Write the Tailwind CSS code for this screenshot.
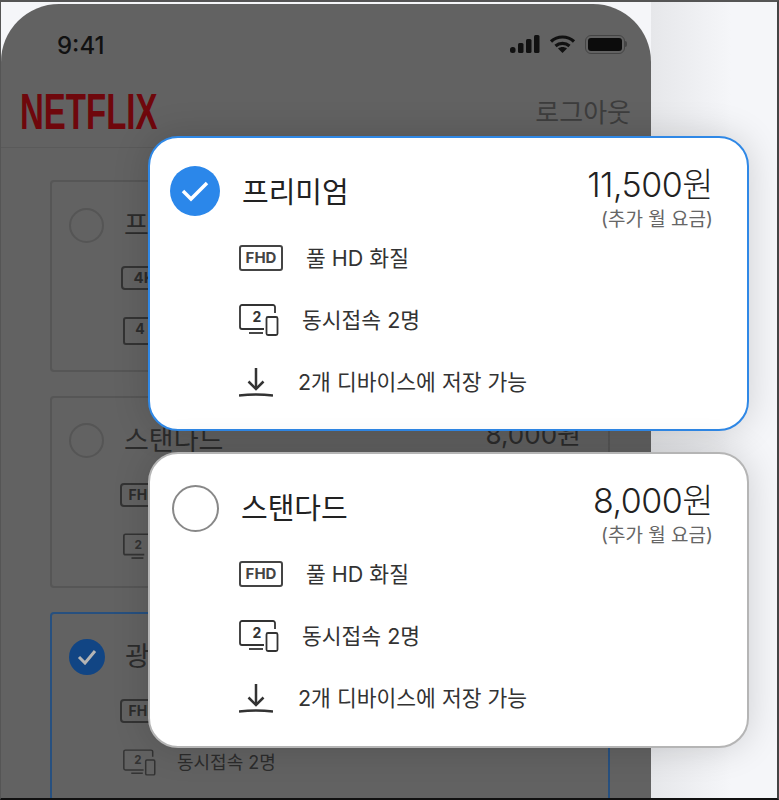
<!DOCTYPE html>
<html lang="ko">
<head>
    <meta charset="UTF-8">
    <title>Netflix 요금제</title>
    <script src="https://cdn.jsdelivr.net/npm/@tailwindcss/browser@4"></script>
</head>
<body class="m-0 w-[779px] h-[800px] overflow-hidden bg-[#f5f6f9] font-['Inter','Noto_Sans_CJK_KR',sans-serif] text-[#222]">
    <div class="relative w-full h-full border-t-2 border-l border-r-2 border-b-2 border-t-[#555] border-l-[#555] border-r-[#444] border-b-[#111] overflow-hidden">

        <!-- soft shadow on the right of the phone -->
        <div class="absolute left-[650px] top-0 w-[80px] h-full bg-gradient-to-r from-[#e6e7ea] to-[#f5f6f9]"></div>

        <!-- dimmed phone -->
        <div class="relative w-[650px] h-[800px] mt-[2px] bg-[#626262] rounded-t-[58px] text-[#2c2c2c]">
            <div class="flex justify-between items-center h-[78px] pl-[56px] pr-[24px] pt-[2px]">
                <span class="mt-[4px] text-[24px] font-medium text-[#111]">9:41</span>
                <div class="flex items-center gap-[9px]">
                    <svg width="30" height="18" viewBox="0 0 30 18" fill="#111"><rect x="0" y="12" width="5.500" height="6" rx="2.500"/><rect x="8" y="8" width="5.500" height="10" rx="1.500"/><rect x="16" y="4" width="5.500" height="14" rx="1.500"/><rect x="24" y="0" width="5.500" height="18" rx="1.500"/></svg>
                    <svg width="27" height="18" viewBox="0 0 27 18" fill="none" stroke="#111" stroke-width="3.200"><path d="M2 6.500c6.500-6 16.500-6 23 0"/><path d="M6.500 11c4-3.500 10-3.500 14 0"/><path d="M13.500 18l-4.500-4.500c2.500-2 6.500-2 9 0z" fill="#111" stroke="none"/></svg>
                    <div class="flex items-center">
                        <div class="w-[40px] h-[19px] rounded-[6px] border border-[#444] p-[2px]"><div class="w-full h-full rounded-[3px] bg-[#0c0c0c]"></div></div>
                        <div class="w-[2px] h-[6px] rounded-r bg-[#444]"></div>
                    </div>
                </div>
            </div>

            <div class="flex justify-between items-center h-[66px] pb-[5px] pl-[19px] pr-[20px] border-b border-[#5a5a5a]">
                <span class="font-['Liberation_Sans',sans-serif] font-bold text-[50px] leading-none text-[#6f070c] scale-x-[0.66] origin-left">NETFLIX</span>
                <span class="text-[26px] text-[#3d3d3d]">로그아웃</span>
            </div>

            <div class="flex flex-col gap-[24px] pt-[32px] pl-[49px] pr-[41px]">
                <div class="h-[192px] border-2 border-[#565656] rounded-[4px] pt-[26px] pl-[17px]">
                    <div class="flex items-center gap-[20px]">
                        <div class="w-[35px] h-[35px] rounded-full border-2 border-[#555]"></div>
                        <span class="text-[27px] leading-[35px]">프리미엄</span>
                    </div>
                    <div class="mt-[23px] ml-[52px] w-[46px] h-[24px] rounded-[4px] border-2 border-[#333] text-[15px] font-bold leading-[20px] text-center">4K</div>
                    <div class="mt-[27px] ml-[54px] w-[34px] h-[28px] rounded-[3px] border-2 border-[#333] text-[14px] font-bold leading-[20px] text-center">4</div>
                </div>
                <div class="h-[192px] border-2 border-[#565656] rounded-[4px] pt-[25px] pl-[17px] pr-[27px]">
                    <div class="flex items-center gap-[20px]">
                        <div class="w-[35px] h-[35px] rounded-full border-2 border-[#555]"></div>
                        <span class="text-[27px] leading-[35px]">스탠다드</span>
                        <span class="ml-auto -mt-[12px] text-[26px] leading-[35px]">8,000원</span>
                    </div>
                    <div class="mt-[25px] ml-[51px] w-[46px] h-[24px] rounded-[4px] border-2 border-[#333] text-[14px] font-bold leading-[20px] text-center">FHD</div>
                    <svg class="mt-[26px] ml-[54px]" width="34" height="28" viewBox="0 0 40 32" fill="none" stroke="#333" stroke-width="2"><path d="M36 9V3a2 2 0 0 0-2-2H3a2 2 0 0 0-2 2v20a2 2 0 0 0 2 2h22"/><path d="M10 29h14"/><text x="18" y="18" font-size="14" font-weight="700" text-anchor="middle" fill="#333" stroke="none" font-family="Inter">2</text></svg>
                </div>
                <div class="h-[220px] border-2 border-[#27507f] rounded-[4px] pt-[25px] pl-[17px]">
                    <div class="flex items-center gap-[20px]">
                        <div class="flex items-center justify-center w-[36px] h-[36px] rounded-full bg-[#114584]">
                            <svg width="20" height="16" viewBox="0 0 20 16" fill="none" stroke="#b4b4b4" stroke-width="3"><path d="M2 8l6 6L18 2"/></svg>
                        </div>
                        <span class="text-[27px] leading-[36px]">광고형</span>
                    </div>
                    <div class="mt-[24px] ml-[51px] w-[46px] h-[24px] rounded-[4px] border-2 border-[#333] text-[14px] font-bold leading-[20px] text-center">FHD</div>
                    <div class="flex items-center gap-[21px] mt-[26px] ml-[54px]">
                        <svg width="33" height="27" viewBox="0 0 40 32" fill="none" stroke="#333" stroke-width="1.800"><path d="M36 9V3a2 2 0 0 0-2-2H3a2 2 0 0 0-2 2v20a2 2 0 0 0 2 2h22"/><path d="M10 29h14"/><rect x="27.500" y="13" width="11" height="18" rx="1.500"/><text x="18" y="18" font-size="14" font-weight="700" text-anchor="middle" fill="#333" stroke="none" font-family="Inter">2</text></svg>
                        <span class="text-[18px]">동시접속 2명</span>
                    </div>
                </div>
            </div>
        </div>

        <!-- 프리미엄 card -->
        <div class="absolute left-[147px] top-[134px] w-[601px] h-[295px] bg-white rounded-[30px] border-2 border-[#2f88e6] pl-[20px] pr-[34px] pt-[28px] shadow-[0_0_36px_rgba(0,0,0,0.16)]">
            <div class="flex items-start h-[61px]">
                <div class="flex items-center justify-center w-[50px] h-[50px] rounded-full bg-[#2b87ea]">
                    <svg width="28" height="22" viewBox="0 0 28 22" fill="none" stroke="#fff" stroke-width="3.500"><path d="M2 11l8 8L26 3"/></svg>
                </div>
                <span class="ml-[22px] mt-[7px] text-[29px] leading-[40px]">프리미엄</span>
                <div class="ml-auto text-right">
                    <div class="text-[34px] leading-[38px] font-light tracking-[-0.5px]">11,500원</div>
                    <div class="mt-[4px] text-[19px] leading-[24px] text-[#666]">(추가 월 요금)</div>
                </div>
            </div>
            <div class="flex flex-col ml-[69px] text-[21.500px] text-[#333]">
                <div class="flex items-center gap-[23px] h-[62px]">
                    <div class="w-[44px] h-[26px] rounded-[3px] border-2 border-[#444] text-[15px] font-bold leading-[22px] text-center text-[#444]">FHD</div>
                    <span>풀 HD 화질</span>
                </div>
                <div class="flex items-center gap-[23px] h-[62px]">
                    <svg width="40" height="32" viewBox="0 0 40 32" fill="none" stroke="#333" stroke-width="1.800"><path d="M36 9V3a2 2 0 0 0-2-2H3a2 2 0 0 0-2 2v20a2 2 0 0 0 2 2h22"/><path d="M10 29h14"/><rect x="27.500" y="13" width="11" height="18" rx="1.500"/><text x="18" y="18" font-size="14" font-weight="700" text-anchor="middle" fill="#333" stroke="none" font-family="Inter">2</text></svg>
                    <span>동시접속 2명</span>
                </div>
                <div class="flex items-center gap-[25px] h-[62px]">
                    <svg width="34" height="30" viewBox="0 0 34 30" fill="none" stroke="#333" stroke-width="2.500"><path d="M17 1V22"/><path d="M9.500 14.500L17 22l7.500-7.500"/><path d="M0 28.500Q17 26.500 34 28.500"/></svg>
                    <span>2개 디바이스에 저장 가능</span>
                </div>
            </div>
        </div>

        <!-- 스탠다드 card -->
        <div class="absolute left-[147px] top-[450px] w-[601px] h-[296px] bg-white rounded-[30px] border-2 border-[#b5b5b5] pl-[22px] pr-[34px] pt-[28px] shadow-[0_0_36px_rgba(0,0,0,0.16)]">
            <div class="flex items-start h-[61px]">
                <div class="w-[47px] h-[47px] mt-[3px] rounded-full border-2 border-[#888]"></div>
                <span class="ml-[22px] mt-[7px] text-[29px] leading-[40px]">스탠다드</span>
                <div class="ml-auto text-right">
                    <div class="text-[34px] leading-[38px] font-light tracking-[-0.5px]">8,000원</div>
                    <div class="mt-[4px] text-[19px] leading-[24px] text-[#666]">(추가 월 요금)</div>
                </div>
            </div>
            <div class="flex flex-col ml-[67px] text-[21.500px] text-[#333]">
                <div class="flex items-center gap-[23px] h-[62px]">
                    <div class="w-[44px] h-[26px] rounded-[3px] border-2 border-[#444] text-[15px] font-bold leading-[22px] text-center text-[#444]">FHD</div>
                    <span>풀 HD 화질</span>
                </div>
                <div class="flex items-center gap-[23px] h-[62px]">
                    <svg width="40" height="32" viewBox="0 0 40 32" fill="none" stroke="#333" stroke-width="1.800"><path d="M36 9V3a2 2 0 0 0-2-2H3a2 2 0 0 0-2 2v20a2 2 0 0 0 2 2h22"/><path d="M10 29h14"/><rect x="27.500" y="13" width="11" height="18" rx="1.500"/><text x="18" y="18" font-size="14" font-weight="700" text-anchor="middle" fill="#333" stroke="none" font-family="Inter">2</text></svg>
                    <span>동시접속 2명</span>
                </div>
                <div class="flex items-center gap-[25px] h-[62px]">
                    <svg width="34" height="30" viewBox="0 0 34 30" fill="none" stroke="#333" stroke-width="2.500"><path d="M17 1V22"/><path d="M9.500 14.500L17 22l7.500-7.500"/><path d="M0 28.500Q17 26.500 34 28.500"/></svg>
                    <span>2개 디바이스에 저장 가능</span>
                </div>
            </div>
        </div>
    </div>
</body>
</html>
